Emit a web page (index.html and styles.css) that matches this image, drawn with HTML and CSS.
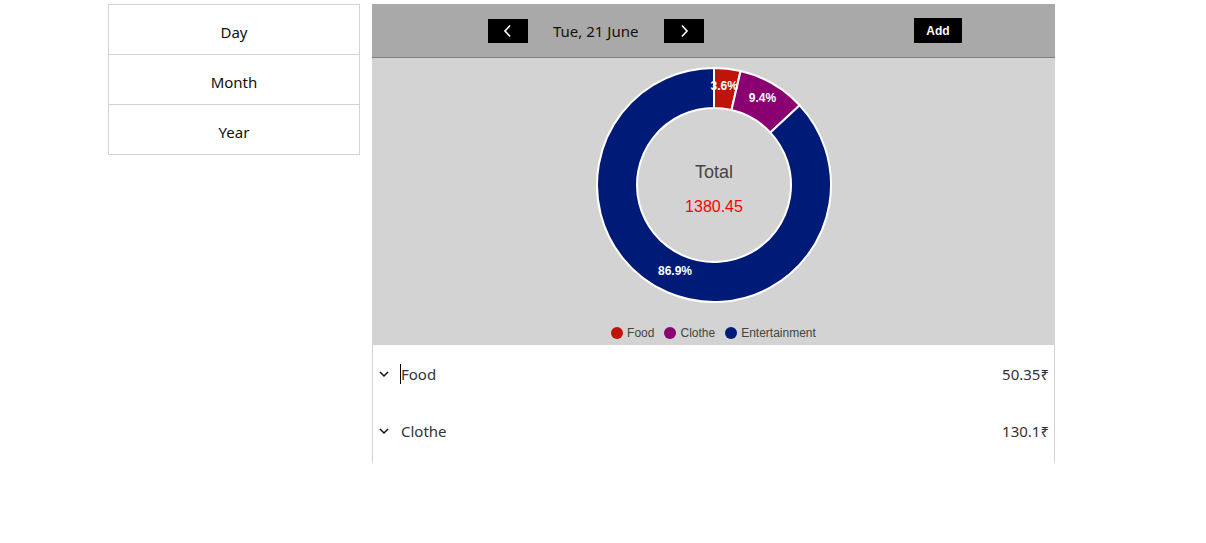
FILE: index.html
```html
<!DOCTYPE html>
<html lang="en">
<head>
<meta charset="utf-8">
<title>Expenses</title>
<link rel="stylesheet" href="styles.css">
</head>
<body>
<div class="app">
  <nav class="sidebar">
    <div class="side-item">Day</div>
    <div class="side-item">Month</div>
    <div class="side-item">Year</div>
  </nav>
  <main class="panel">
    <header class="topbar">
      <button class="nav-btn" aria-label="Previous">
        <svg width="10" height="14" viewBox="0 0 10 14"><path d="M7 1.5 L2 7 L7 12.5" fill="none" stroke="#fff" stroke-width="1.6"/></svg>
      </button>
      <span class="date">Tue, 21 June</span>
      <button class="nav-btn" aria-label="Next">
        <svg width="10" height="14" viewBox="0 0 10 14"><path d="M3 1.5 L8 7 L3 12.5" fill="none" stroke="#fff" stroke-width="1.6"/></svg>
      </button>
      <button class="add-btn">Add</button>
    </header>
    <section class="chart">
      <svg class="donut" width="240" height="240" viewBox="0 0 240 240">
        <g stroke="#fff" stroke-width="2" stroke-linejoin="round">
          <path fill="#c0140a" d="M120 3 A117 117 0 0 1 146.58 6.05 L137.49 45.01 A77 77 0 0 0 120 43 Z"/>
          <path fill="#8b0070" d="M146.58 6.05 A117 117 0 0 1 205.67 40.31 L176.38 67.56 A77 77 0 0 0 137.49 45.01 Z"/>
          <path fill="#001a78" d="M205.67 40.31 A117 117 0 1 1 120 3 L120 43 A77 77 0 1 0 176.38 67.56 Z"/>
        </g>
        <g class="pct">
          <text x="130.3" y="24.5">3.6%</text>
          <text x="168.5" y="37">9.4%</text>
          <text x="81" y="210.3">86.9%</text>
        </g>
        <text class="total-label" x="120" y="113.3">Total</text>
        <text class="total-value" x="120" y="146.7">1380.45</text>
      </svg>
      <div class="legend">
        <span class="legend-item"><i class="dot dot-food"></i>Food</span>
        <span class="legend-item"><i class="dot dot-clothe"></i>Clothe</span>
        <span class="legend-item"><i class="dot dot-ent"></i>Entertainment</span>
      </div>
    </section>
    <section class="list">
      <div class="row">
        <svg class="chev" width="10" height="10" viewBox="0 0 10 10"><path d="M1 3 L5 7 L9 3" fill="none" stroke="#111" stroke-width="1.5"/></svg>
        <span class="name caret">Food</span>
        <span class="amount">50.35₹</span>
      </div>
      <div class="row">
        <svg class="chev" width="10" height="10" viewBox="0 0 10 10"><path d="M1 3 L5 7 L9 3" fill="none" stroke="#111" stroke-width="1.5"/></svg>
        <span class="name">Clothe</span>
        <span class="amount">130.1₹</span>
      </div>
    </section>
  </main>
</div>
</body>
</html>
```
FILE: styles.css
```css
* { box-sizing: border-box; }
body {
  margin: 0;
  font-family: "Noto Sans", "Open Sans", sans-serif;
  color: #111;
  background: #fff;
}
.app {
  display: flex;
  align-items: flex-start;
  gap: 12px;
  padding: 4px 0 0 108px;
}
.sidebar {
  width: 252px;
  border: 1px solid #d3d3d3;
  display: flex;
  flex-direction: column;
}
.side-item {
  height: 50px;
  display: flex;
  align-items: center;
  justify-content: center;
  padding-top: 5px;
  font-size: 15px;
  color: #111;
  border-bottom: 1px solid #d3d3d3;
}
.side-item:last-child {
  height: 49px;
  border-bottom: none;
}
.panel {
  width: 683px;
}
.topbar {
  height: 54px;
  background: #a9a9a9;
  border-bottom: 1px solid #808080;
  display: flex;
  align-items: center;
  padding: 0 93px 0 116px;
}
.nav-btn {
  width: 40px;
  height: 24px;
  background: #000;
  border: none;
  padding: 0;
  display: flex;
  align-items: center;
  justify-content: center;
}
.date {
  font-size: 15px;
  color: #111;
  margin: 0 26px 0 25px;
  line-height: 24px;
}
.add-btn {
  margin-left: auto;
  width: 48px;
  height: 25px;
  background: #000;
  color: #fff;
  border: none;
  padding: 0;
  font-family: "Liberation Sans", Arial, sans-serif;
  font-weight: bold;
  font-size: 12px;
}
.chart {
  height: 287px;
  background: #d3d3d3;
  display: flex;
  flex-direction: column;
  align-items: center;
}
.donut {
  margin-top: 7px;
  display: block;
}
.pct text {
  fill: #fff;
  font-family: "Liberation Sans", Arial, sans-serif;
  font-weight: bold;
  font-size: 12px;
  text-anchor: middle;
}
.total-label {
  fill: #444;
  font-family: "Liberation Sans", Arial, sans-serif;
  font-size: 18px;
  text-anchor: middle;
}
.total-value {
  fill: #ff0000;
  font-family: "Liberation Sans", Arial, sans-serif;
  font-size: 16px;
  text-anchor: middle;
}
.legend {
  margin-top: 21px;
  display: flex;
  gap: 10px;
  font-family: "Liberation Sans", Arial, sans-serif;
  font-size: 12px;
  color: #444;
  line-height: 14px;
}
.legend-item {
  display: flex;
  align-items: center;
  gap: 4px;
}
.dot {
  width: 12px;
  height: 12px;
  border-radius: 50%;
  display: inline-block;
}
.dot-food { background: #c0140a; }
.dot-clothe { background: #8b0070; }
.dot-ent { background: #001a78; }
.list {
  border-left: 1px solid #d3d3d3;
  border-right: 1px solid #d3d3d3;
  padding-bottom: 4px;
}
.row {
  height: 57px;
  display: flex;
  align-items: center;
  padding: 0 5px 0 6px;
  font-size: 15px;
  color: #333;
}
.chev {
  display: block;
  margin-right: 12px;
}
.name {
  flex: 1;
  line-height: 20px;
}
.caret {
  border-left: 1px solid #000;
  margin-left: -1px;
}
.amount {
  color: #333;
}
```
